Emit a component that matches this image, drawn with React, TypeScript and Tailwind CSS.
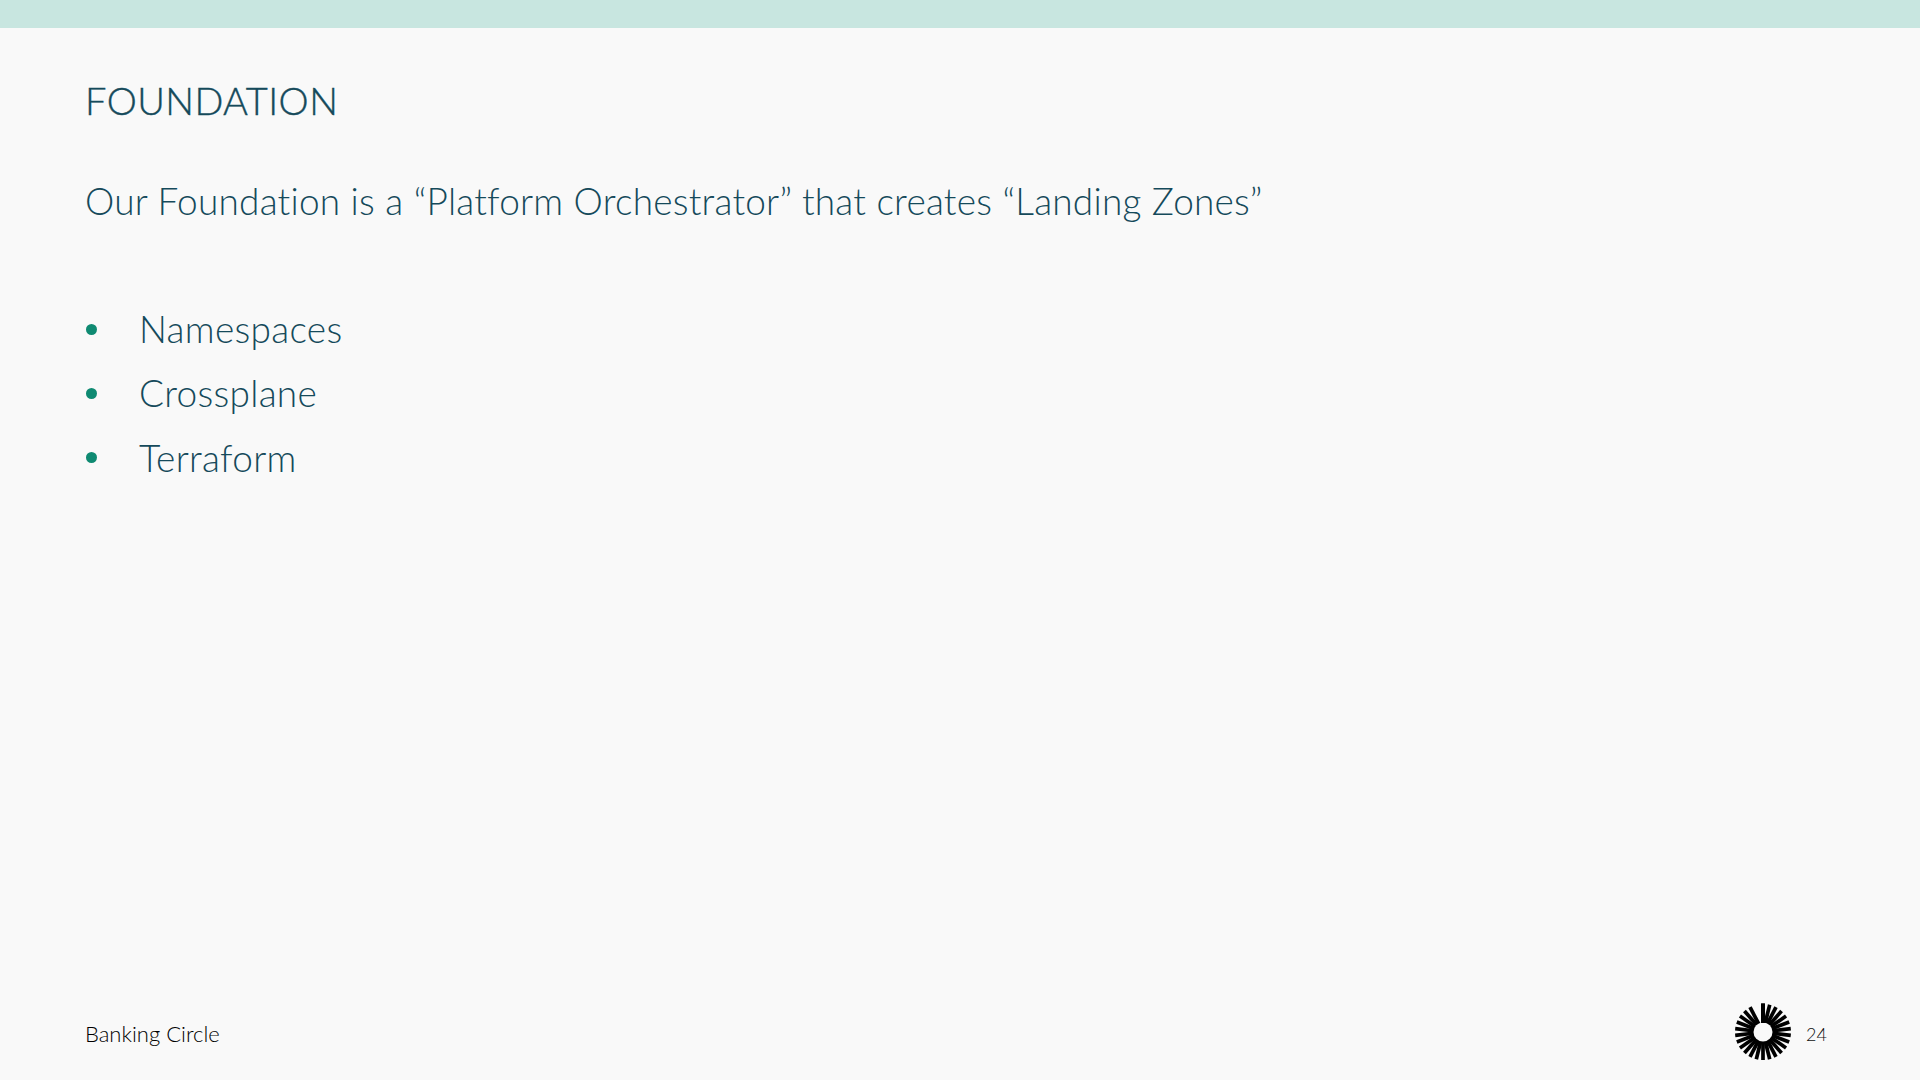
const rays = Array.from({ length: 26 }, (_, i) => (i * 360) / 26).filter((_, i) => i !== 25);

function Logo() {
  return (
    <svg width="58" height="58" viewBox="-29 -29 58 58" className="block">
      {rays.map((a) => (
        <line
          key={a}
          x1="0"
          y1={-8}
          x2="0"
          y2={a === 0 ? -28.5 : -28}
          stroke="#000"
          strokeWidth="3.7"
          transform={`rotate(${a})`}
        />
      ))}
      <circle r="9.5" fill="#f9f9f9" />
      <rect x="-2" y="-28.5" width="4" height="19.5" fill="#000" />
    </svg>
  );
}

const items = ["Namespaces", "Crossplane", "Terraform"];

export default function App() {
  return (
    <div className="w-[1920px] h-[1080px] bg-[#f9f9f9] flex flex-col overflow-hidden font-['Lato',sans-serif] text-[#154a5b]">
      <div className="h-[28px] bg-[#c8e6e0]" />
      <div className="flex-1 flex flex-col pl-[85px] pr-[93px]">
        <h1 className="mt-[48px] h-[48px] leading-[48px] text-[38px] font-light tracking-[0.45px] [-webkit-text-stroke:0.4px_#154a5b]">FOUNDATION</h1>
        <p className="mt-[54px] h-[46px] leading-[46px] text-[37px] font-light tracking-[0.22px]">
          Our Foundation is a “Platform Orchestrator” that creates “Landing Zones”
        </p>
        <ul className="mt-[82px] flex flex-col gap-[18.3px]">
          {items.map((t) => (
            <li key={t} className="flex items-center h-[46px] leading-[46px] text-[37px] font-light tracking-[0.3px]">
              <span className="w-[54px] flex items-center">
                <span className="block w-[11px] h-[11px] rounded-full bg-[#0f8a72] ml-[1px]" />
              </span>
              {t}
            </li>
          ))}
        </ul>
        <div className="mt-auto mb-[19px] flex items-center justify-between">
          <span className="pt-[3px] text-[22px] font-light text-[#000]">Banking Circle</span>
          <div className="flex items-center gap-[14px]">
            <Logo />
            <span className="pt-[4px] text-[18px] font-light text-[#111]">24</span>
          </div>
        </div>
      </div>
    </div>
  );
}
